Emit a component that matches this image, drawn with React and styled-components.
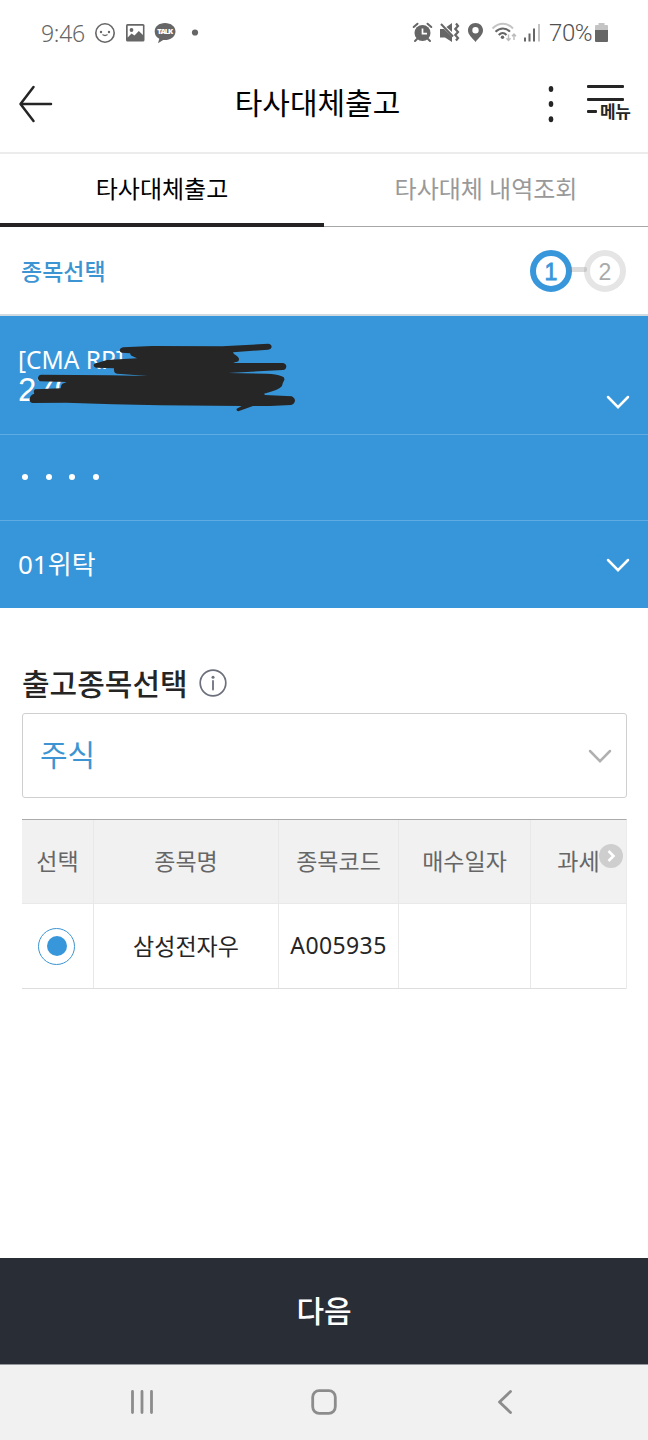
import { useState } from "react";
import styled, { createGlobalStyle } from "styled-components";

const GlobalStyle = createGlobalStyle`
    * {
        box-sizing: border-box;
    }
    body {
        margin: 0;
        background: #fff;
        font-family: "Noto Sans", "Noto Sans CJK KR", sans-serif;
    }
    button {
        border: 0;
        padding: 0;
        margin: 0;
        background: none;
        font-family: inherit;
    }
    svg {
        display: block;
    }
`

const Screen = styled.div`
    width: 648px;
    height: 1440px;
    display: flex;
    flex-direction: column;
    overflow: hidden;
`

const StatusBar = styled.div`
    height: 66px;
    flex-shrink: 0;
    display: flex;
    justify-content: space-between;
    padding: 0 39px 0 41px;
    color: #666;
    font-size: 23px;
    line-height: 66px;
`

const StatusGroup = styled.div`
    display: flex;
    align-items: center;
`

const Clock = styled.span`
    width: 53px;
    font-weight: 300;
    letter-spacing: -0.3px;
`

const Percent = styled.span`
    width: 45px;
    margin-left: 2px;
    font-family: Roboto, sans-serif;
    font-weight: 300;
    font-size: 24px;
    letter-spacing: -0.4px;
    color: #505050;
`

const Header = styled.header`
    height: 88px;
    flex-shrink: 0;
    display: flex;
    align-items: center;
    justify-content: space-between;
    padding: 0 15px 10px 18px;
    border-bottom: 2px solid #ececec;
`

const HeaderSide = styled.div`
    width: ${(props) => (props.$right ? 136 : 120)}px;
    display: flex;
    justify-content: ${(props) => (props.$right ? "flex-end" : "flex-start")};
`

const Title = styled.h1`
    margin: 0;
    padding-bottom: 3px;
    font-size: 30px;
    font-weight: 400;
    line-height: 44px;
    color: #000;
`

const MenuButton = styled.button`
    width: 46px;
    height: 40px;
    margin-left: 32px;
    padding-top: 1px;
    display: flex;
    flex-direction: column;
    align-items: flex-start;
`

const MenuLine = styled.span`
    width: ${(props) => props.$width || 37}px;
    height: 2.5px;
    border-radius: 1px;
    background: #252525;
    margin-bottom: ${(props) => props.$gap || 0}px;
`

const MenuLabel = styled.span`
    display: flex;
    align-items: center;
    gap: 3px;
    height: 18px;
    font-size: 17px;
    font-weight: 700;
    line-height: 18px;
    letter-spacing: -0.4px;
    color: #252525;
    white-space: nowrap;
`

const Tabs = styled.div`
    height: 73px;
    flex-shrink: 0;
    display: flex;
`

const Tab = styled.button`
    flex: 1;
    font-size: 24px;
    line-height: 69px;
    padding-bottom: ${(props) => (props.$active ? 0 : 3)}px;
    color: ${(props) => (props.$active ? "#000" : "#999")};
    border-bottom: ${(props) => (props.$active ? "4px solid #252323" : "1px solid #a8a8a8")};
`

const StepRow = styled.div`
    height: 89px;
    flex-shrink: 0;
    display: flex;
    align-items: center;
    justify-content: space-between;
    padding: 0 22px 0 21px;
    border-bottom: 2px solid #cfdbe0;
`

const StepName = styled.span`
    padding-bottom: 2px;
    font-size: 23px;
    font-weight: 500;
    color: #3c95d2;
`

const Steps = styled.div`
    display: flex;
    align-items: center;
`

const Step = styled.span`
    width: 42px;
    height: 42px;
    border-radius: 50%;
    border: 6px solid ${(props) => (props.$active ? "#3897db" : "#e5e5e5")};
    color: ${(props) => (props.$active ? "#3897db" : "#aaa")};
    font-family: "Liberation Sans", sans-serif;
    font-size: 23px;
    -webkit-text-stroke: ${(props) => (props.$active ? 0.8 : 0)}px #3897db;
    line-height: 32px;
    text-align: center;
`

const StepLink = styled.span`
    width: 18px;
    height: 5px;
    margin: -2px -3px 0;
    border-radius: 2px;
    background: rgba(130, 130, 130, 0.28);
    z-index: 1;
`

const Account = styled.section`
    height: 292px;
    flex-shrink: 0;
    background: #3796da;
    color: #fff;
`

const AccountRow = styled.div`
    position: relative;
    height: ${(props) => props.$height}px;
    display: flex;
    align-items: ${(props) => props.$align || "center"};
    justify-content: space-between;
    padding: 0 18px;
    font-size: 26px;
    border-bottom: ${(props) => (props.$last ? "0" : "1px solid #5fabe2")};
`

const AccountText = styled.div`
    padding-top: 28px;
`

const AccountType = styled.div`
    font-size: 24.5px;
    line-height: 32px;
`

const AccountNumber = styled.div`
    font-family: "Liberation Sans", sans-serif;
    font-size: 33px;
    line-height: 28px;
`

const SubAccount = styled.span`
    padding-bottom: 3px;
`

const Scribble = styled.svg`
    position: absolute;
    left: 28px;
    top: 24px;
`

const ChevronSlot = styled.div`
    padding-top: ${(props) => props.$top || 0}px;
`

const Password = styled.div`
    display: flex;
    gap: 17.5px;
    padding: 0 0 1px 4px;
`

const PasswordDot = styled.span`
    width: 6px;
    height: 6px;
    border-radius: 50%;
    background: #fff;
`

const Content = styled.main`
    flex: 1;
    padding: 52px 21px 0 22px;
`

const SectionTitle = styled.h2`
    height: 43px;
    margin: 0 0 10px;
    display: flex;
    align-items: center;
    gap: 11px;
    font-size: 30px;
    font-weight: 500;
    color: #252525;
    svg {
        margin-top: 3px;
    }
`

const SelectBox = styled.button`
    width: 605px;
    height: 85px;
    display: flex;
    align-items: center;
    justify-content: space-between;
    padding: 0 14px 0 17px;
    border: 1.5px solid #cfcfcf;
    border-radius: 3px;
    font-size: 30px;
    color: #3c95d2;
`

const SelectValue = styled.span`
    padding-bottom: 5px;
`

const TableWrap = styled.div`
    position: relative;
    width: 605px;
    margin-top: 21px;
    overflow: hidden;
    border-top: 1px solid #aaa;
    border-right: 1px solid #ebebeb;
`

const Row = styled.div`
    display: grid;
    grid-template-columns: 71px 185px 120px 132px 96px;
    height: ${(props) => (props.$head ? 84 : 85)}px;
    background: ${(props) => (props.$head ? "#f1f1f1" : "#fff")};
    color: ${(props) => (props.$head ? "#666" : "#252525")};
    border-bottom: 1px solid ${(props) => (props.$head ? "#e9e9e9" : "#dedede")};
    font-size: 23px;
`

const Cell = styled.div`
    display: flex;
    align-items: center;
    justify-content: center;
    padding-bottom: ${(props) => (props.$radio ? 0 : 3)}px;
    padding-right: ${(props) => (props.$radio ? 2 : 0)}px;
    white-space: nowrap;
    letter-spacing: ${(props) => props.$spacing || 0}px;
    & + & {
        border-left: 1px solid #e8e8e8;
    }
`

const Radio = styled.button`
    width: 37px;
    height: 37px;
    display: flex;
    align-items: center;
    justify-content: center;
    border: 1px solid #3c95d2;
    border-radius: 50%;
    &::after {
        content: "";
        width: 20px;
        height: 20px;
        border-radius: 50%;
        background: ${(props) => (props.$checked ? "#3897db" : "transparent")};
    }
`

const ScrollHint = styled.svg`
    position: absolute;
    right: 3px;
    top: 24px;
`

const NextButton = styled.button`
    height: 106px;
    flex-shrink: 0;
    padding-bottom: 5px;
    background: #292d36;
    color: #fff;
    font-size: 30px;
    font-weight: 500;
`

const NavBar = styled.nav`
    height: 76px;
    flex-shrink: 0;
    display: flex;
    align-items: center;
    justify-content: space-between;
    padding: 0 135px 2px 130px;
    background: #f1f1f1;
    border-top: 1px solid #93969a;
`

const HomeKey = styled.svg`
    margin-right: 4px;
`

const Chevron = ({ color }) => (
    <svg width="24" height="16" viewBox="0 0 24 16">
        <path d="M2 3 L12 13.2 L22 3" fill="none" stroke={color} strokeWidth="2.5" strokeLinecap="round" />
    </svg>
)

const NoticeIcons = () => (
    <svg width="110" height="24" viewBox="94 21 110 24">
        <circle cx="105" cy="33" r="9.2" fill="none" stroke="#666" strokeWidth="1.6" />
        <circle cx="101" cy="32" r="1.2" fill="#666" />
        <circle cx="109" cy="32" r="1.2" fill="#666" />
        <path d="M102.5 34.5 Q105 36.5 107.5 34.5" fill="none" stroke="#666" strokeWidth="1.3" />
        <rect x="126" y="24" width="18.5" height="17.5" rx="1.5" fill="#666" />
        <path d="M127.7 25.7 H142.9 V35 L138.8 31 L134.5 35.5 L131.5 33.5 L127.7 37.5 Z" fill="#fff" />
        <circle cx="131.5" cy="30" r="1.9" fill="#666" />
        <path d="M165 23 C159 23 154.7 26.5 154.7 31.5 C154.7 35 156.5 37.3 159.3 38.7 L158 43.2 L163.2 40 C170 40.5 175.5 37 175.5 31.500 C175.5 26.5 171 23 165 23 Z" fill="#666" />
        <text x="165.2" y="34.4" textAnchor="middle" fontFamily="Open Sans, sans-serif" fontSize="7.5" fontWeight="800" fill="#fff" textLength="16">TALK</text>
        <circle cx="195" cy="32.5" r="3.1" fill="#666" />
    </svg>
)

const SignalIcons = () => (
    <svg width="136" height="24" viewBox="411 21 136 24">
        {/* alarm */}
        <circle cx="422.5" cy="33" r="8" fill="#666" />
        <path d="M422.5 28.5 V33.7 H427" fill="none" stroke="#fff" strokeWidth="1.7" />
        <path d="M413.7 27 L417.5 23.7 M431.3 27 L427.5 23.7 M417 39 L415 41 M428 39 L430 41" stroke="#666" strokeWidth="2" strokeLinecap="round" />
        {/* muted with vibration */}
        <path d="M440 29 H444 L452 36.5 V42 L445 37.500 H440 Z M446.5 27 L452 23 V32 Z" fill="#666" />
        <path d="M441 24 L453 36.5" stroke="#666" strokeWidth="2" />
        <path d="M456 23.5 l2 2.5 l-2.7 3 l2.7 3 l-2.7 3 l2.7 3 l-2 2.5" fill="none" stroke="#666" strokeWidth="2.2" />
        {/* location */}
        <path fillRule="evenodd" d="M475.5 23 C471.2 23 468 26.2 468 30.3 C468 35 472 37.500 475.5 42 C479 37.5 483 35 483 30.3 C483 26.2 479.8 23 475.5 23 Z M475.5 27 A3.2 3.2 0 1 1 475.5 33.4 A3.2 3.2 0 1 1 475.5 27 Z" fill="#666" />
        {/* wifi */}
        <path d="M492.5 28.5 C499 22.3 507 22.3 513 28.5" fill="none" stroke="#c4c4c4" strokeWidth="2" />
        <path d="M495.5 31.7 C500 27.3 506 27.3 510 31.7 M498.7 35 C501.5 32.3 504 32.3 506.5 35" fill="none" stroke="#666" strokeWidth="2" />
        <circle cx="502.5" cy="37.2" r="1.7" fill="#666" />
        <path d="M508.5 34.5 V40.5 M506.5 38.3 L508.5 40.5 L510.5 38.3 M514 40 V34 M512 36.3 L514 34 L516 36.3" fill="none" stroke="#bbb" strokeWidth="1.4" />
        {/* reception */}
        <path d="M525 37.5 V41.5 M529.5 33.5 V41.5 M534 28.5 V41.5" stroke="#666" strokeWidth="2" />
        <path d="M539 24 V41.5" stroke="#c4c4c4" strokeWidth="2" />
    </svg>
)

const Battery = () => (
    <svg width="15" height="24" viewBox="594 21 15 24">
        <path d="M598.5 25 V23 H604.5 V25 H607 Q608 25 608 26 V31 H595 V26 Q595 25 596 25 Z" fill="#c4c4c4" />
        <path d="M595 30 H608 V41 Q608 42 607 42 H596 Q595 42 595 41 Z" fill="#666" />
    </svg>
)

const columns = ["선택", "종목명", "종목코드", "매수일자", "과세"]

const App = () => {
    const [tab, setTab] = useState(0);

    return (
        <Screen>
            <GlobalStyle />
            <StatusBar>
                <StatusGroup>
                    <Clock>9:46</Clock>
                    <NoticeIcons />
                </StatusGroup>
                <StatusGroup>
                    <SignalIcons />
                    <Percent>70%</Percent>
                    <Battery />
                </StatusGroup>
            </StatusBar>

            <Header>
                <HeaderSide>
                    <svg width="36" height="40" viewBox="18 84 36 40">
                        <path d="M51 104 H21 M33.5 87 L20.5 104 L33.5 121" fill="none" stroke="#252525" strokeWidth="2.5" strokeLinecap="round" strokeLinejoin="round" />
                    </svg>
                </HeaderSide>
                <Title>타사대체출고</Title>
                <HeaderSide $right>
                    <svg width="8" height="40" viewBox="547 84 8 40">
                        <ellipse cx="551" cy="89" rx="2.3" ry="3" fill="#252525" />
                        <ellipse cx="551" cy="104" rx="2.3" ry="3" fill="#252525" />
                        <ellipse cx="551" cy="119.3" rx="2.3" ry="3" fill="#252525" />
                    </svg>
                    <MenuButton>
                        <MenuLine $gap={10.5} />
                        <MenuLine $gap={2} />
                        <MenuLabel><MenuLine $width={10} />메뉴</MenuLabel>
                    </MenuButton>
                </HeaderSide>
            </Header>

            <Tabs>
                <Tab $active={tab === 0} onClick={() => {setTab(0)}}>타사대체출고</Tab>
                <Tab $active={tab === 1} onClick={() => {setTab(1)}}>타사대체 내역조회</Tab>
            </Tabs>

            <StepRow>
                <StepName>종목선택</StepName>
                <Steps>
                    <Step $active>1</Step>
                    <StepLink />
                    <Step>2</Step>
                </Steps>
            </StepRow>

            <Account>
                <AccountRow $height={119} $align="flex-start">
                    <AccountText>
                        <AccountType>[CMA RP]</AccountType>
                        <AccountNumber>270</AccountNumber>
                    </AccountText>
                    <ChevronSlot $top={78}>
                        <Chevron color="#fff" />
                    </ChevronSlot>
                    <Scribble width="270" height="74" viewBox="28 340 270 74">
                        <path
                            d="M123 347.3 L152 346 L222 346.3 L268 343.7 Q271.500 344 271.7 347 Q271 349.500 268 349.7 L233 352.3 L234 354 Q239 357 239 359 Q239 362 236 362 L233 363 L283 363 Q286.500 364 286.3 366.7 Q286 369.500 283 370 L228 373 L267 373.7 Q276 374 281.7 376.3 Q285 377 284.3 380 Q283 382 282 386 Q279 390 264 393.7 L265 395 L291.7 396.3 Q295 398 295 401 Q294 404.500 291 405 L270 406 L253 406 L238.300 411.300 Q236 411 236.700 408.700 L241.700 406 L160 405.300 L113 404.300 L66 402.700 L32 403 Q29 402 29.700 399 Q30 395 34.300 393.700 Q33 390.500 35 389.300 L60.700 388.300 Q61 384 63 383.500 L66.700 382 L40 381.300 Q37.500 380.500 38 377.500 Q38.500 375 41 374.700 L110 375.300 L148 376 L117 373.700 Q113.500 373 114 368.300 L96 367.700 Q93.500 367 93.700 365 Q94 363 98 362.700 L106.700 360 L137 358.300 L131 355.500 L130 353.300 L121.700 352.700 Q119.500 352 119.700 350 Q120 348 123 347.300 Z"
                            fill="#262626"
                        />
                    </Scribble>
                </AccountRow>
                <AccountRow $height={86}>
                    <Password>
                        <PasswordDot />
                        <PasswordDot />
                        <PasswordDot />
                        <PasswordDot />
                    </Password>
                </AccountRow>
                <AccountRow $height={87} $last>
                    <SubAccount>01위탁</SubAccount>
                    <Chevron color="#fff" />
                </AccountRow>
            </Account>

            <Content>
                <SectionTitle>
                    출고종목선택
                    <svg width="28" height="28" viewBox="0 0 28 28">
                        <circle cx="14" cy="14" r="12.8" fill="none" stroke="#6b707c" strokeWidth="1.7" />
                        <circle cx="14" cy="8.2" r="1.5" fill="#6b707c" />
                        <path d="M14 12 V20.5" stroke="#6b707c" strokeWidth="1.8" strokeLinecap="round" />
                    </svg>
                </SectionTitle>
                <SelectBox>
                    <SelectValue>주식</SelectValue>
                    <Chevron color="#b0b0b0" />
                </SelectBox>
                <TableWrap>
                    <Row $head>
                        {columns.map((name) => <Cell key={name}>{name}</Cell>)}
                    </Row>
                    <Row>
                        <Cell $radio><Radio $checked /></Cell>
                        <Cell>삼성전자우</Cell>
                        <Cell $spacing={0.4}>A005935</Cell>
                        <Cell />
                        <Cell />
                    </Row>
                    <ScrollHint width="24" height="24" viewBox="0 0 24 24">
                        <circle cx="12" cy="12" r="12" fill="#cecece" />
                        <path d="M9.5 7 L14.5 12 L9.5 17" fill="none" stroke="#fff" strokeWidth="2.6" />
                    </ScrollHint>
                </TableWrap>
            </Content>

            <NextButton>다음</NextButton>
            <NavBar>
                <svg width="24" height="26" viewBox="0 0 24 26">
                    <path d="M2.5 2.5 V23.5 M12 2.5 V23.5 M21.5 2.5 V23.5" stroke="#8c8c8c" strokeWidth="2.8" strokeLinecap="round" />
                </svg>
                <HomeKey width="26" height="26" viewBox="0 0 26 26">
                    <rect x="1.7" y="1.7" width="22.6" height="22.6" rx="6.5" fill="none" stroke="#8c8c8c" strokeWidth="2.8" />
                </HomeKey>
                <svg width="16" height="26" viewBox="0 0 16 26">
                    <path d="M13.5 2.5 L2.5 13 L13.5 23.5" fill="none" stroke="#8c8c8c" strokeWidth="2.8" strokeLinecap="round" strokeLinejoin="round" />
                </svg>
            </NavBar>
        </Screen>
    )
};

export default App;
